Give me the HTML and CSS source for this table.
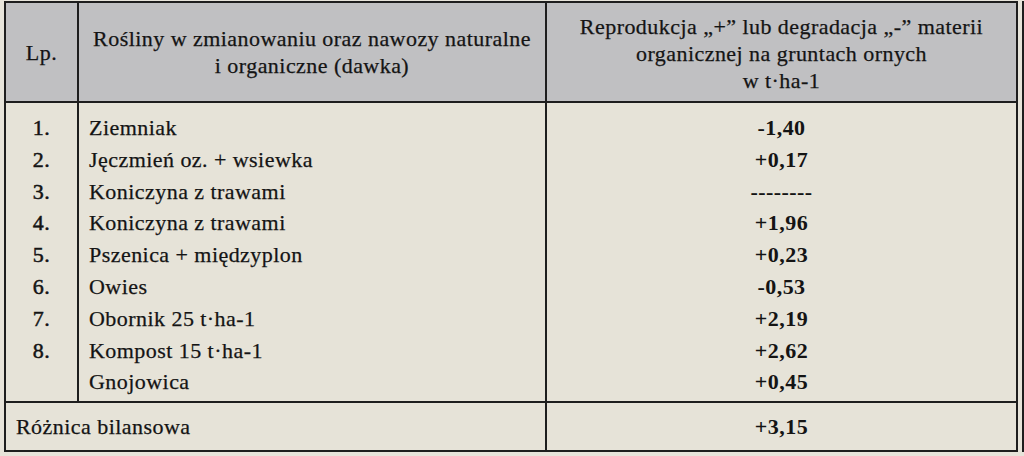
FILE: index.html
```html
<!DOCTYPE html>
<html lang="pl">
<head>
<meta charset="utf-8">
<title>Bilans materii organicznej</title>
<link rel="stylesheet" href="styles.css">
</head>
<body>
<div class="page">
  <table class="bilans">
    <colgroup>
      <col class="c-lp">
      <col class="c-name">
      <col class="c-val">
    </colgroup>
    <thead>
      <tr>
        <th class="h-lp">Lp.</th>
        <th class="h-name">Rośliny w zmianowaniu oraz nawozy naturalne<br>i organiczne (dawka)</th>
        <th class="h-val">Reprodukcja „+” lub degradacja „-” materii<br>organicznej na gruntach ornych<br>w t·ha-1</th>
      </tr>
    </thead>
    <tbody>
      <tr class="first"><td class="lp">1.</td><td class="name">Ziemniak</td><td class="val">-1,40</td></tr>
      <tr><td class="lp">2.</td><td class="name">Jęczmień oz. + wsiewka</td><td class="val">+0,17</td></tr>
      <tr><td class="lp">3.</td><td class="name">Koniczyna z trawami</td><td class="val">--------</td></tr>
      <tr><td class="lp">4.</td><td class="name">Koniczyna z trawami</td><td class="val">+1,96</td></tr>
      <tr><td class="lp">5.</td><td class="name">Pszenica + międzyplon</td><td class="val">+0,23</td></tr>
      <tr><td class="lp">6.</td><td class="name">Owies</td><td class="val">-0,53</td></tr>
      <tr><td class="lp">7.</td><td class="name">Obornik 25 t·ha-1</td><td class="val">+2,19</td></tr>
      <tr><td class="lp">8.</td><td class="name">Kompost 15 t·ha-1</td><td class="val">+2,62</td></tr>
      <tr class="last"><td class="lp"></td><td class="name">Gnojowica</td><td class="val">+0,45</td></tr>
    </tbody>
    <tfoot>
      <tr>
        <td class="sum-label" colspan="2">Różnica bilansowa</td>
        <td class="val sum-val">+3,15</td>
      </tr>
    </tfoot>
  </table>
  <div class="edge"></div>
</div>
</body>
</html>
```
FILE: styles.css
```css
html, body {
  margin: 0;
  padding: 0;
  background: #e7e4da;
}
body {
  font-family: "Liberation Serif", "Times New Roman", serif;
  color: #141414;
}
.page {
  display: flex;
  align-items: stretch;
  padding: 1px 0 0 4px;
  height: 452px;
  box-sizing: border-box;
}
.bilans {
  border-collapse: collapse;
  width: 1012px;
  table-layout: fixed;
  font-size: 22px;
  letter-spacing: 0.45px;
  -webkit-text-stroke: 0.25px #141414;
  background: #e6e3d8;
  border: 2px solid #1e1e1e;
  align-self: flex-start;
}
.c-lp { width: 73px; }
.c-name { width: 468px; }
.c-val { width: 471px; }
.bilans th {
  background: #c0c0c2;
  font-weight: normal;
  line-height: 27px;
  height: 100px;
  padding: 0 2px;
  border: 2px solid #1e1e1e;
  text-align: center;
  vertical-align: middle;
  box-sizing: border-box;
}
.bilans .h-val { padding-top: 2px; }
.bilans td {
  padding: 0;
  line-height: 31.8px;
  border-left: 2px solid #1e1e1e;
  border-right: 2px solid #1e1e1e;
  vertical-align: middle;
}
.bilans tbody tr.first td { padding-top: 9px; }
.bilans tbody tr.last td { padding-bottom: 3px; }
.bilans td.lp {
  text-align: center;
  -webkit-text-stroke: 0.5px #141414;
}
.bilans td.name { padding-left: 10px; }
.val {
  text-align: center;
  font-weight: bold;
  -webkit-text-stroke: 0;
}
.bilans tfoot td {
  border-top: 2px solid #1e1e1e;
  height: 47px;
  line-height: 47px;
  padding: 0;
}
.bilans tfoot td.sum-label {
  padding-left: 10px;
  text-align: left;
}
.edge {
  margin-left: 4px;
  border-left: 2px solid #1e1e1e;
  width: 0;
}
```
